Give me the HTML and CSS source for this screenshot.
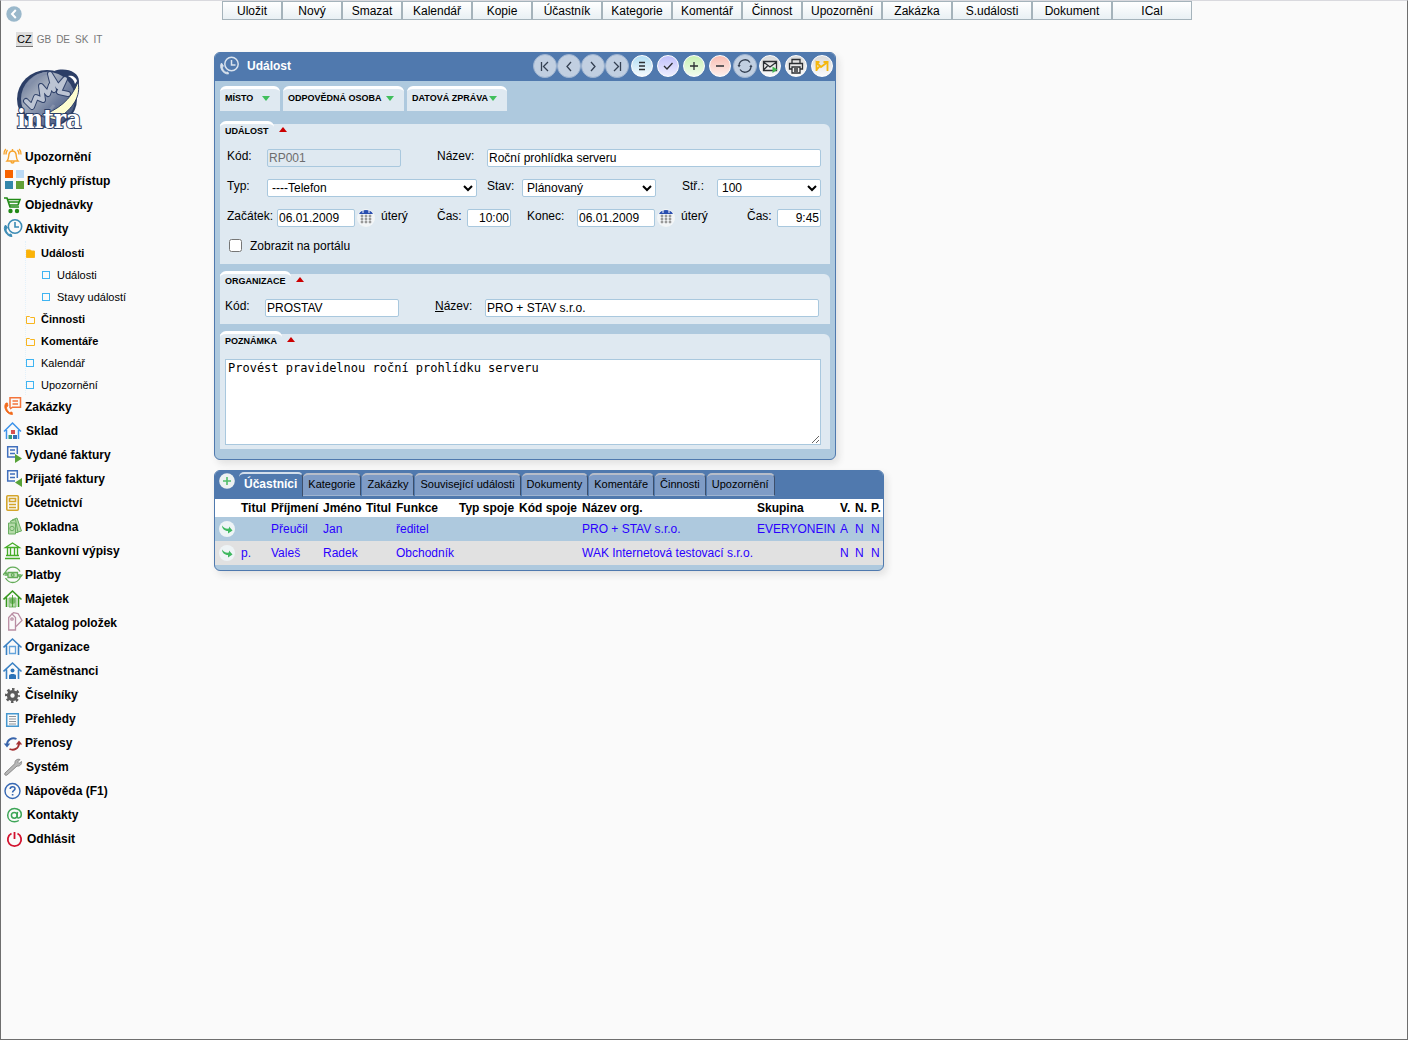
FILE: index.html
```html
<!DOCTYPE html>
<html lang="cs">
<head>
<meta charset="utf-8">
<title>Událost – intra</title>
<link rel="stylesheet" href="styles.css">
</head>
<body>
<div class="page">
<aside class="sidebar">
  <button class="collapse" type="button" aria-label="Skrýt menu"><svg width="16" height="16" viewBox="0 0 16 16"><circle cx="8" cy="8" r="7.7" fill="#9ab8cb"/><path d="M9.8 4 6 8l3.800 4" fill="none" stroke="#fff" stroke-width="2"/></svg></button>
  <nav class="langs" aria-label="Jazyk">
    <a class="current" href="#">CZ</a><a href="#">GB</a><a href="#">DE</a><a href="#">SK</a><a href="#">IT</a>
  </nav>
  <a class="logo" href="#" aria-label="intra">
    <svg width="72" height="70" viewBox="0 0 72 70">
      <defs><linearGradient id="globe" x1="0" y1="0" x2="1" y2="1"><stop offset="0" stop-color="#55668c"/><stop offset=".35" stop-color="#a4adbd"/><stop offset=".6" stop-color="#6f7e9e"/><stop offset="1" stop-color="#33466f"/></linearGradient></defs>
      <ellipse cx="31" cy="32" rx="30" ry="29" fill="#2c3e66"/>
      <path d="M38 4c12-4 25 1 25 10 0 5-1 9-3 12L44 8z" fill="#2c3e66"/>
      <ellipse cx="32" cy="32" rx="27" ry="27" fill="url(#globe)"/>
      <path d="M12 18c6-8 14-12 22-12M20 48c8 2 14-4 18-10" fill="none" stroke="#8490aa" stroke-width="3"/>
      <path d="M10 34l6 6 4-10 7 3-2-14 7 8 3-9 3 5-4-16 8 13 7-8-6 13 9 2" fill="none" stroke="#31436b" stroke-width="6" stroke-linejoin="round" stroke-linecap="round"/>
      <path d="M10 34l6 6 4-10 7 3-2-14 7 8 3-9 3 5-4-16 8 13 7-8-6 13 9 2" fill="none" stroke="#bcc4d3" stroke-width="4" stroke-linejoin="round" stroke-linecap="round"/>
      <path d="M52 9c4-1 8 1 9 5l-2 3c-1-4-3-6-7-8z" fill="#fff"/>
      <path d="M62 15c3 14-4 26-22 38L24 49c18-6 31-16 38-34z" fill="#fdfdd0" stroke="#2c3e66" stroke-width="1"/>
      <text x="1" y="61" class="logo-text">intra</text>
    </svg>
  </a>
  <nav class="menu" aria-label="Menu">
    <a href="#"><svg width="22" height="24" viewBox="0 0 22 24" fill="none" stroke="#f7a42c" stroke-width="1.400"><path d="M4 16c2-2 1.500-5 2-7 .5-2 1.800-3 3.500-3S12.500 7 13 9c.5 2 0 5 2 7zM9.500 6V4M8 16.500c0 2 3 2 3 0M4.500 5C3 6.500 3 8 3 9.500M14.500 5C16 6.500 16 8 16 9.500M2.800 4C1.300 5.500 1 7.500 1 9.500M16.200 4c1.500 1.500 1.800 3.500 1.800 5.500"/></svg>Upozornění</a>
    <a href="#"><svg width="24" height="24" viewBox="0 0 24 24"><path fill="#f76300" d="M2 1h8v8H2z"/><path fill="#bbd9f5" d="M13 1h8v8h-8z"/><path fill="#3387ab" d="M2 12h8v8H2z"/><path fill="#629f36" d="M13 12h8v8h-8z"/></svg>Rychlý přístup</a>
    <a href="#"><svg width="22" height="24" viewBox="0 0 22 24" fill="none" stroke="#218a16" stroke-width="1.600"><path d="M1 5h3l3 9h9M4.500 6.500H17L15 12H7M6 9h10"/><circle cx="7.500" cy="18" r="1.400" fill="#218a16"/><circle cx="14" cy="18" r="1.400" fill="#218a16"/></svg>Objednávky</a>
    <a href="#"><svg width="22" height="24" viewBox="0 0 22 24" fill="none" stroke="#3c8cb5" stroke-width="1.600"><circle cx="12" cy="9.500" r="6.700"/><path d="M12 5v5h4"/><path d="M2.500 8C-1 12 4 20 9 19.500L8 17l-2 .5C4 16 3 14 3 12l1.500-1z" fill="#3c8cb5" stroke-width="1"/></svg>Aktivity</a>
    <div class="submenu">
      <a class="strong" href="#"><svg class="folder" width="9" height="9" viewBox="0 0 9 9"><path d="M.5 1h4l1 1h3v6.500h-8z" fill="#fbb305"/></svg>Události</a>
      <a class="nested" href="#"><i class="leaf"></i>Události</a>
      <a class="nested" href="#"><i class="leaf"></i>Stavy událostí</a>
      <a class="strong" href="#"><svg class="folder" width="9" height="9" viewBox="0 0 9 9"><path d="M.5 1.500h3l1 1h4v6h-8z"/></svg>Činnosti</a>
      <a class="strong" href="#"><svg class="folder" width="9" height="9" viewBox="0 0 9 9"><path d="M.5 1.500h3l1 1h4v6h-8z"/></svg>Komentáře</a>
      <a href="#"><i class="leaf"></i>Kalendář</a>
      <a href="#"><i class="leaf"></i>Upozornění</a>
    </div>
    <a href="#"><svg width="22" height="24" viewBox="0 0 22 24" fill="none" stroke="#f4743b" stroke-width="1.500"><path d="M7 13V2.700h10.500v9.500H9.500L7 14M9.500 6H15M9.500 9H15"/><path d="M3 8C-.5 12 4 20 9.500 19.500L9 17l-2.500.5C4.500 16 3.500 14 3.500 12L5 11 4.500 8z" fill="#f26a1b" stroke="#f26a1b" stroke-width=".8"/></svg>Zakázky</a>
    <a href="#"><svg width="23" height="24" viewBox="0 0 23 24" fill="none" stroke="#3d93ea" stroke-width="1.500"><path d="M1 12.500 9.500 4l8.500 8.500M3.500 11v9M15.500 11v9"/><path fill="#d95050" stroke="none" d="M8 11h4v4H8z"/><path fill="#35997c" stroke="none" d="M5.500 16H9v4H5.500z"/><path fill="#356fb5" stroke="none" d="M10 16h4v4h-4z"/></svg>Sklad</a>
    <a href="#"><svg width="22" height="24" viewBox="0 0 22 24" fill="none" stroke="#4170bd" stroke-width="1.500"><path d="M12 14H4.700V3.700h9.600V11M7 7h5M7 10.500h5"/><path d="M12 11v9l7-4.500z" fill="#57a337" stroke="none"/></svg>Vydané faktury</a>
    <a href="#"><svg width="22" height="24" viewBox="0 0 22 24" fill="none" stroke="#4170bd" stroke-width="1.500"><path d="M12 14H4.700V3.700h9.600V11M7 7h5M7 10.500h5"/><path d="M19 11v9l-7-4.500z" fill="#57a337" stroke="none"/></svg>Přijaté faktury</a>
    <a href="#"><svg width="22" height="24" viewBox="0 0 22 24" fill="none" stroke="#d4a52b" stroke-width="1.600"><rect x="3.800" y="4.800" width="11.500" height="14.400" rx="1"/><path d="M6.500 7.500h6v3h-6zM6 13.500h7M6 16.500h7"/></svg>Účetnictví</a>
    <a href="#"><svg width="22" height="24" viewBox="0 0 22 24" fill="#b5dba9" stroke="#6aae62" stroke-width="1"><path d="M9 5l5-2 4.500 13-4 1z"/><path d="M7.500 6l5-1.500 2.500 13h-4z"/><path d="M5.500 8h7v11h-7z"/><circle cx="9" cy="13.500" r="2.200"/></svg>Pokladna</a>
    <a href="#"><svg width="22" height="24" viewBox="0 0 22 24" fill="none" stroke="#46ad28" stroke-width="1.300"><path d="M2.500 8.500 9.500 4l7 4.500zM4.500 9v7M7.500 9v7M11.500 9v7M14.500 9v7M3 16.500h13M2 19.500h15"/></svg>Bankovní výpisy</a>
    <a href="#"><svg width="22" height="24" viewBox="0 0 22 24" fill="none" stroke="#63ac58" stroke-width="1.300"><path d="M2.500 9C6 2 14 3 17 8.500M17 15c-3.500 6-11 6-14.500 0M0 12l2.500-3L5 12M14.500 11.500 17 14.500l2.500-3"/><path d="M5 9.500h9.500v5H5z" fill="#c9e5c2"/><circle cx="9.700" cy="12" r="1.400"/><path d="M1.500 12H5M14.500 12H18"/></svg>Platby</a>
    <a href="#"><svg width="22" height="24" viewBox="0 0 22 24" fill="none" stroke="#37981f" stroke-width="1.600"><path d="M.5 12.500 9.500 4l9 8.500M3.500 10.500V20M15.500 10.500V20"/><path d="M6 11h7v9H6z" fill="#b5dba9" stroke="#75b567" stroke-width="1"/><circle cx="9.500" cy="14" r="3" fill="#75b567" stroke="none"/><path d="M9.500 8v12" stroke-width=".8"/></svg>Majetek</a>
    <a href="#"><svg width="22" height="24" viewBox="0 0 22 24" fill="none" stroke="#b98ea3" stroke-width="1.300"><path d="M5.700 19V6.500L9 3l3.500 3.500V19z"/><circle cx="9" cy="8" r="1.200"/><path d="M9 3l1.500-1.300L15 2.500l4 7-6 6"/></svg>Katalog položek</a>
    <a href="#"><svg width="22" height="24" viewBox="0 0 22 24" fill="none" stroke="#3b82c4" stroke-width="1.600"><path d="M.5 12.500 9.500 4l9 8.500M3.500 10.500V20M15.500 10.500V20"/><path d="M6.500 11.500h6v7h-6z" stroke="#64a4dc" stroke-width="1.300"/></svg>Organizace</a>
    <a href="#"><svg width="22" height="24" viewBox="0 0 22 24" fill="none" stroke="#3b82c4" stroke-width="1.600"><path d="M.5 12.500 9.500 4l9 8.500M3.500 10.500V20M15.500 10.500V20"/><circle cx="9.500" cy="11.500" r="2" fill="#2c73b8" stroke="none"/><path d="M6 20v-3.500c0-2 7-2 7 0V20z" fill="#2c73b8" stroke="none"/></svg>Zaměstnanci</a>
    <a href="#"><svg width="22" height="24" viewBox="0 0 22 24" fill="none" stroke="#5b5b5b"><circle cx="9.500" cy="12.500" r="3.900" stroke-width="3.400"/><circle cx="9.500" cy="12.500" r="6.300" stroke-width="2.400" stroke-dasharray="2.500 2.448" stroke-dashoffset="1.250"/></svg>Číselníky</a>
    <a href="#"><svg width="22" height="24" viewBox="0 0 22 24" fill="none" stroke="#4597cf" stroke-width="1.500"><path d="M3.700 6.700h11.600v12.600H3.700z"/><path d="M6 9.500h7M6 12h7M6 14.500h7M6 17h7" stroke="#8d9399" stroke-width="1"/></svg>Přehledy</a>
    <a href="#"><svg width="22" height="24" viewBox="0 0 22 24" fill="none" stroke-width="1.900"><path d="M13.500 8C9 6 4.500 8.500 4 13" stroke="#3864ab"/><path d="M.8 12.500h6.400L4 16.500z" fill="#3864ab"/><path d="M6.500 18c4.500 2 9-.5 9.500-5" stroke="#a53132"/><path d="M12.800 13.500h6.400L16 9.500z" fill="#a53132"/></svg>Přenosy</a>
    <a href="#"><svg width="23" height="24" viewBox="0 0 23 24"><path d="M2 18 12 8.500c-.5-3 2-5 5-4L14.500 7l1.500 1.500 2.500-2c.5 3-2 5-4.500 4.500L4 20c-1.500 1-3-.5-2-2z" fill="#b7b7b7" stroke="#8a8a8a" stroke-width="1"/></svg>Systém</a>
    <a href="#"><svg width="22" height="24" viewBox="0 0 22 24" fill="none" stroke="#3567b3" stroke-width="1.400"><circle cx="9.500" cy="12" r="7.500"/><path d="M7.200 10c0-3 4.800-3 4.800-.3 0 1.800-2.400 1.600-2.400 3.800M9.600 15v1.600" stroke-width="1.600"/></svg>Nápověda (F1)</a>
    <a href="#"><svg width="24" height="24" viewBox="0 0 24 24" fill="none" stroke="#3da557" stroke-width="1.500"><circle cx="11.300" cy="12.300" r="2.900"/><path d="M14.500 8.800 14 13c-.2 3 4.300 2.500 4.300-1.500 0-3.500-3-6-6.800-6C7.500 5.500 4.700 8.500 4.700 12.200c0 4 3 6.500 6.800 6.500 1.800 0 3.200-.4 4.300-1.200"/></svg>Kontakty</a>
    <a href="#"><svg width="24" height="24" viewBox="0 0 24 24" fill="none" stroke="#d2122e" stroke-width="1.800"><path d="M8.500 6.500a6.700 6.700 0 1 0 6 0M11.500 5v7"/></svg>Odhlásit</a>
  </nav>
</aside>

<main class="content">
  <div class="actions">
    <button class="s" type="button">Uložit</button><button class="s" type="button">Nový</button><button class="s" type="button">Smazat</button><button class="m" type="button">Kalendář</button><button class="s" type="button">Kopie</button><button class="m" type="button">Účastník</button><button class="m" type="button">Kategorie</button><button class="m" type="button">Komentář</button><button class="s" type="button">Činnost</button><button class="l" type="button">Upozornění</button><button class="m" type="button">Zakázka</button><button class="l" type="button">S.události</button><button class="l" type="button">Dokument</button><button class="l" type="button">ICal</button>
  </div>

  <form class="panel event">
    <header class="titlebar">
      <svg width="22" height="22" viewBox="0 0 22 22" fill="none" stroke="#d9e3ee" stroke-width="1.500"><circle cx="12.500" cy="9" r="6.700"/><path d="M12.500 5v5h4"/><path d="M2.500 8C-.5 12 4 19.500 9.500 19L9 17l-2 .3C4.500 16 3.500 14 3.500 12l1-1z" fill="#d9e3ee" stroke-width=".8"/></svg>
      <h1>Událost</h1>
      <div class="tools">
        <button type="button" class="round nav" aria-label="První"><svg viewBox="0 0 24 24"><path d="M8.500 8v9M15 8l-4.500 4.500L15 17"/></svg></button>
        <button type="button" class="round nav" aria-label="Předchozí"><svg viewBox="0 0 24 24"><path d="M14 8l-4 4.500 4 4.500"/></svg></button>
        <button type="button" class="round nav" aria-label="Další"><svg viewBox="0 0 24 24"><path d="M10 8l4 4.500-4 4.500"/></svg></button>
        <button type="button" class="round nav" aria-label="Poslední"><svg viewBox="0 0 24 24"><path d="M9 8l4.500 4.500L9 17M15.500 8v9"/></svg></button>
        <button type="button" class="round blue" aria-label="Seznam"><svg viewBox="0 0 22 22"><path d="M8 7.500h6M8 11h6M8 14.500h6"/></svg></button>
        <button type="button" class="round violet" aria-label="Uložit"><svg viewBox="0 0 22 22"><path d="M7 11l3 3 5.500-6"/></svg></button>
        <button type="button" class="round green" aria-label="Přidat"><svg viewBox="0 0 22 22"><path d="M11 7v8M7 11h8"/></svg></button>
        <button type="button" class="round red" aria-label="Smazat"><svg viewBox="0 0 22 22"><path d="M7 11h8"/></svg></button>
        <button type="button" class="round nav" aria-label="Obnovit"><svg viewBox="0 0 24 24"><path d="M6 12a6 6 0 0 1 11-3.500M18 12a6 6 0 0 1-11 3.500" stroke-width="1.300"/><path d="M4.500 11h3.200L6 13.500zM16.300 13h3.200L18 10.500z" fill="#344052" stroke="none"/></svg></button>
        <button type="button" class="round grey" aria-label="E-mail"><svg viewBox="0 0 22 22"><path d="M4.500 6.500h13v9h-13zM4.500 7l6.500 5 6.500-5M4.500 15l4-4"/><path d="M13.500 11.500v6.500l5-3.500z" fill="#3fb94f" stroke="none"/></svg></button>
        <button type="button" class="round grey" aria-label="Tisk"><svg viewBox="0 0 22 22"><path d="M7 8V4.500h8V8M7 14H4.500V8.500h13V14H15M7 12h8v6H7zM9 14h4M9 16h4"/></svg></button>
        <button type="button" class="round grey" aria-label="Zpráva"><svg viewBox="0 0 22 22"><path d="M5.500 16V7.500L10 12l6-4.500M16.500 16V8M12.500 7h5M5 7h3.500M5 15.500l3.500-4" stroke="#f5b70c" stroke-width="1.800"/></svg></button>
      </div>
    </header>

    <div class="folds">
      <button type="button" class="fold place">MÍSTO<i class="down"></i></button>
      <button type="button" class="fold person">ODPOVĚDNÁ OSOBA<i class="down"></i></button>
      <button type="button" class="fold message">DATOVÁ ZPRÁVA<i class="down"></i></button>
    </div>

    <section class="group">
      <h2><button type="button"><span>UDÁLOST</span><i class="up"></i></button></h2>
      <div class="rows">
        <div class="row two">
          <div class="field"><label class="w40" for="code">Kód:</label><input class="medium" id="code" value="RP001" disabled></div>
          <div class="field"><label class="w50" for="name">Název:</label><input class="fill" id="name" value="Roční prohlídka serveru"></div>
        </div>
        <div class="row three">
          <div class="field"><label class="w40" for="type">Typ:</label><select class="type" id="type"><option>----Telefon</option></select></div>
          <div class="field"><label class="w35" for="state">Stav:</label><select class="medium" id="state"><option>Plánovaný</option></select></div>
          <div class="field"><label class="w35" for="centre">Stř.:</label><select class="fill" id="centre"><option>100</option></select></div>
        </div>
        <div class="row four">
          <div class="field"><label class="w50" for="from">Začátek:</label><input class="date" id="from" value="06.01.2009"><button class="cal" type="button" aria-label="Kalendář"><svg width="18" height="18" viewBox="0 0 18 18"><path d="M2 5C4-.5 14-.5 16 5z" fill="#2a4fb0"/><path d="M6 1v3M12 1v3" stroke="#fff"/><path d="M4 6h2v2H4zm4 0h2v2H8zm4 0h2v2h-2zM4 9h2v2H4zm4 0h2v2H8zm4 0h2v2h-2zM4 12h2v2H4zm4 0h2v2H8zm4 0h2v2h-2z" fill="#999" stroke="#999" stroke-width=".5"/></svg></button><span>úterý</span></div>
          <div class="field"><label class="w30" for="from-time">Čas:</label><input class="time" id="from-time" value="10:00"></div>
          <div class="field"><label class="w50" for="to">Konec:</label><input class="date" id="to" value="06.01.2009"><button class="cal" type="button" aria-label="Kalendář"><svg width="18" height="18" viewBox="0 0 18 18"><path d="M2 5C4-.5 14-.5 16 5z" fill="#2a4fb0"/><path d="M6 1v3M12 1v3" stroke="#fff"/><path d="M4 6h2v2H4zm4 0h2v2H8zm4 0h2v2h-2zM4 9h2v2H4zm4 0h2v2H8zm4 0h2v2h-2zM4 12h2v2H4zm4 0h2v2H8zm4 0h2v2h-2z" fill="#999" stroke="#999" stroke-width=".5"/></svg></button><span>úterý</span></div>
          <div class="field"><label class="w30" for="to-time">Čas:</label><input class="time" id="to-time" value="9:45"></div>
        </div>
        <label class="check"><input type="checkbox">Zobrazit na portálu</label>
      </div>
    </section>

    <section class="group">
      <h2><button type="button"><span>ORGANIZACE</span><i class="up"></i></button></h2>
      <div class="rows org">
        <div class="row two">
          <div class="field"><label class="w40" for="org-code">Kód:</label><input class="medium" id="org-code" value="PROSTAV"></div>
          <div class="field"><label class="w50" for="org-name"><u>N</u>ázev:</label><input class="fill" id="org-name" value="PRO + STAV s.r.o."></div>
        </div>
      </div>
    </section>

    <section class="group">
      <h2><button type="button"><span>POZNÁMKA</span><i class="up"></i></button></h2>
      <div class="note"><textarea aria-label="Poznámka">Provést pravidelnou roční prohlídku serveru</textarea></div>
    </section>
  </form>

  <section class="panel people">
    <div class="tabbar">
      <button type="button" class="add" aria-label="Přidat účastníka"><svg width="16" height="16" viewBox="0 0 16 16"><circle cx="8" cy="8" r="7.800" fill="#edf1f1"/><path d="M8 4v8M4 8h8" stroke="#50bd68" stroke-width="1.600"/></svg></button>
      <button type="button" class="tab active">Účastníci</button><button type="button" class="tab">Kategorie</button><button type="button" class="tab">Zakázky</button><button type="button" class="tab">Související události</button><button type="button" class="tab">Dokumenty</button><button type="button" class="tab">Komentáře</button><button type="button" class="tab">Činnosti</button><button type="button" class="tab">Upozornění</button>
    </div>
    <table>
      <colgroup><col class="c24"><col class="c30"><col class="c52"><col class="c43"><col class="c30"><col class="c63"><col class="c60"><col class="c63"><col class="c175"><col class="c83"><col class="c15"><col class="c16"><col class="c14"></colgroup>
      <thead><tr><th></th><th>Titul</th><th>Příjmení</th><th>Jméno</th><th>Titul</th><th>Funkce</th><th>Typ spoje</th><th>Kód spoje</th><th>Název org.</th><th>Skupina</th><th>V.</th><th>N.</th><th>P.</th></tr></thead>
      <tbody>
        <tr><td><a href="#" aria-label="Otevřít"><svg width="18" height="18" viewBox="0 0 18 18"><circle cx="9" cy="9" r="8" fill="#eef4f6"/><path d="M4 5.500c1.500 2.500 4 3.500 7 3V6.500l3.500 4-4.500 3v-2.500C6.500 11 4 8.500 4 5.500z" fill="#3fb960"/></svg></a></td><td></td><td><a href="#">Přeučil</a></td><td><a href="#">Jan</a></td><td></td><td><a href="#">ředitel</a></td><td></td><td></td><td><a href="#">PRO + STAV s.r.o.</a></td><td><a href="#">EVERYONEIN</a></td><td><a href="#">A</a></td><td><a href="#">N</a></td><td><a href="#">N</a></td></tr>
        <tr><td><a href="#" aria-label="Otevřít"><svg width="18" height="18" viewBox="0 0 18 18"><circle cx="9" cy="9" r="8" fill="#eef4f6"/><path d="M4 5.500c1.500 2.500 4 3.500 7 3V6.500l3.500 4-4.500 3v-2.500C6.500 11 4 8.500 4 5.500z" fill="#3fb960"/></svg></a></td><td><a href="#">p.</a></td><td><a href="#">Valeš</a></td><td><a href="#">Radek</a></td><td></td><td><a href="#">Obchodník</a></td><td></td><td></td><td><a href="#">WAK Internetová testovací s.r.o.</a></td><td></td><td><a href="#">N</a></td><td><a href="#">N</a></td><td><a href="#">N</a></td></tr>
      </tbody>
    </table>
  </section>
</main>
</div>
</body>
</html>
```

FILE: styles.css
```css
* { box-sizing: border-box; }
body { margin: 0; background: #fafafa; color: #000; font: 12px/14px "Liberation Sans", Arial, sans-serif; }
button, input, select { font: inherit; color: inherit; margin: 0; }
button { padding: 0; border: 0; background: none; display: flex; align-items: center; justify-content: center; }
a { color: inherit; text-decoration: none; }
h1, h2 { margin: 0; font-size: 12px; }
svg { display: block; flex: none; }

.page { display: flex; align-items: flex-start; min-height: 100vh; border: 1px solid #6e6e6e; border-top-color: #d9d9de; }

/* sidebar */
.sidebar { flex: 0 0 213px; padding: 5px 0 0 2px; }
.collapse { margin-left: 3px; }
.langs { display: flex; align-items: center; gap: 5px; margin: 10px 0 0 13px; font-size: 10px; color: #777; }
.langs .current { margin-right: -1px; padding: 0 1px; font-size: 11px; color: #000; background: #dedede; border-bottom: 1px solid #777; }
.logo { display: block; margin: 20px 0 0 13px; }
.logo-text { font: bold 26px "DejaVu Serif Condensed", "DejaVu Serif", serif; fill: #fff; stroke: #2c3e66; stroke-width: 2px; paint-order: stroke; }
.menu { display: flex; flex-direction: column; margin-top: 8px; font-weight: bold; }
.menu > a { display: flex; align-items: center; height: 24px; }
.submenu { display: flex; flex-direction: column; margin-left: 22px; border-left: 1px dotted #e3f1fa; font-size: 11px; font-weight: normal; }
.submenu a { display: flex; align-items: center; gap: 7px; height: 22px; padding: 2px 0 0; }
.submenu .nested { margin-left: 16px; }
.submenu .strong { gap: 6px; font-weight: bold; }
.leaf { width: 8px; height: 8px; border: 1px solid #3fb4f2; }
.folder { fill: none; stroke: #f8b51e; }

/* top actions */
.content { flex: 1; min-width: 0; }
.actions { display: flex; flex-wrap: wrap; margin-left: 8px; }
.actions button { height: 19px; border: 1px solid #a5b3bb; background: linear-gradient(#fff, #e9f0f4); }
.actions .s { width: 60px; }
.actions .m { width: 70px; }
.actions .l { width: 80px; }

/* panels */
.panel { max-width: 100%; border: 1px solid #4f79ae; border-radius: 6px; background: #aec9de; box-shadow: 3px 4px 7px #e2e2e2; overflow: hidden; }
.event { width: 622px; margin: 32px 0 10px; padding-bottom: 10px; }
.titlebar { display: flex; align-items: center; height: 28px; padding: 0 0 2px 4px; background: #5079ae; color: #fff; }
.titlebar h1 { margin-left: 6px; }
.tools { display: flex; align-items: center; margin-left: auto; }
.round { width: 22px; height: 22px; margin: 0 2px; border: 1px solid #fff; border-radius: 50%; }
.round svg { width: 22px; height: 22px; fill: none; stroke: #2c2f33; stroke-width: 1.3px; }
.round.nav { width: 24px; height: 24px; margin: 0; background: #c1cfe1; border-color: #9db3d0; }
.round.nav svg { width: 24px; height: 24px; stroke: #344052; }
.round.blue { background: linear-gradient(#b3def3, #f4fafd); }
.round.violet { background: linear-gradient(#c0c0fb, #eeeefe); }
.round.green { background: linear-gradient(#c8f1b4, #f1fbed); }
.round.red { background: linear-gradient(#f9bdb2, #fdefec); }
.round.grey { background: linear-gradient(#d9d9d9, #fafafa); }

.folds { display: flex; gap: 3px; margin: 5px 5px 13px; }
.fold { justify-content: space-between; height: 25px; padding: 0 10px 4px 5px; border-top: 3px solid #fff; border-radius: 6px 6px 0 0; background: #dfe9f1; font-size: 9px; font-weight: bold; }
.place { width: 60px; }
.person { width: 121px; }
.message { width: 100px; }
.down, .up { border: 4px solid transparent; }
.down { border-top: 5px solid #40bf5c; border-bottom: 0; }
.up { border-bottom: 5px solid #cc0000; border-top: 0; }

.group { margin: 10px 5px 0; border-radius: 0 6px 0 0; background: #dfe9f1; }
.group h2 { height: 25px; }
.group h2 button { gap: 5px; font-size: 9px; font-weight: bold; line-height: 14px; margin-top: -3px; float: left; }
.group h2 span { padding: 0 5px; border-top: 3px solid #fff; border-radius: 6px 6px 0 0; }
.rows { display: grid; gap: 12px; padding: 0 9px 7px 7px; }
.rows.org { padding: 0 11px 7px 5px; }
.row { display: grid; }
.row.two { grid-template-columns: 210px 1fr; }
.row.three { grid-template-columns: 260px 195px 1fr; }
.row.four { grid-template-columns: 210px 90px 220px 1fr; }
.field { display: flex; align-items: flex-start; }
.field label { flex: none; white-space: nowrap; }
.w30 { width: 30px; }
.w35 { width: 35px; }
.w40 { width: 40px; }
.w50 { width: 50px; }
.field input, .field select { height: 18px; border: 1px solid #a9c8de; border-radius: 2px; background: #fff; }
.field input { padding: 0 1px; }
.field input:disabled { color: #6d6d6d; background: #dfe9f1; }
.medium { width: 134px; }
.fill { flex: 1; min-width: 0; }
.type { width: 210px; }
.field .date { width: 78px; }
.field .time { width: 44px; text-align: right; }
.cal { margin: 0 6px 0 2px; border-radius: 50%; background: #f2f5f7; }
.check { display: flex; align-items: flex-start; gap: 8px; height: 18px; }
.check input { width: 13px; height: 13px; margin: 0 0 0 2px; }
.note { padding: 0 9px 4px 5px; }
textarea { display: block; width: 100%; height: 86px; margin: 0; padding: 1px 2px; border: 1px solid #a9c8de; background: #fff; color: #000; font: 12px/14px "DejaVu Sans Mono", monospace; }

/* participants */
.people { width: 670px; padding-bottom: 5px; }
.tabbar { display: flex; align-items: flex-start; gap: 1px; height: 28px; padding: 1px 4px 0; background: #5079ae; }
.add { margin: 1px 3px 0 0; }
.tab { height: 23px; margin-top: 1px; padding: 0 5px 2px; border: 1px solid #9fb4d0; border-top: 2px solid #b7bdc9; border-left: 0; border-right: 1px solid #3d4f6b; border-radius: 5px 5px 0 0; background: #7f9cc6; font-size: 11px; white-space: nowrap; }
.tab.active { height: 25px; margin: 0 -1px 0 0; background: none; color: #fff; font-size: 12px; font-weight: bold; border-color: #d3deeb #3d4f6b transparent transparent; }
table { width: 100%; table-layout: fixed; border-collapse: collapse; }
th, td { padding: 0 0 0 2px; text-align: left; white-space: nowrap; }
th { height: 18px; background: #fff; }
td { height: 24px; color: #2a00ff; }
td:first-child { padding-left: 3px; }
tbody tr:nth-child(2) { background: #e1e1e1; }
.c14 { width: 14px; }
.c15 { width: 15px; }
.c16 { width: 16px; }
.c24 { width: 24px; }
.c30 { width: 30px; }
.c43 { width: 43px; }
.c52 { width: 52px; }
.c60 { width: 60px; }
.c63 { width: 63px; }
.c83 { width: 83px; }
.c175 { width: 175px; }
```
